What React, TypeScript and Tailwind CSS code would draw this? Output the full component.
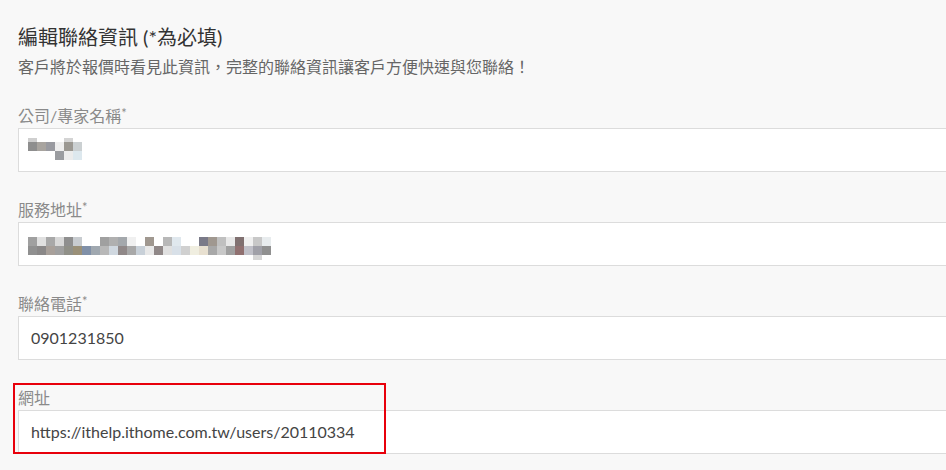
import React from "react";

const companyRows: string[][] = [
  ["bg-[#cfcfcf]", "bg-transparent", "bg-transparent", "bg-transparent", "bg-[#d4d4d4]", "bg-transparent"],
  ["bg-[#8e8e8e]", "bg-[#a8a49f]", "bg-[#999aa0]", "bg-[#eeeeee]", "bg-[#9b9892]", "bg-[#cbd0d2]"],
  ["bg-transparent", "bg-transparent", "bg-transparent", "bg-[#9a9ca0]", "bg-[#ececec]", "bg-[#dde8ee]"],
];

const addressRows: string[][] = [
  [
    "bg-[#a0a0a0]", "bg-[#e0e0e0]", "bg-[#a8a8a8]", "bg-[#d8d8d8]", "bg-[#8f8f8f]", "bg-[#c8ccd0]",
    "bg-transparent", "bg-transparent", "bg-[#a0a0a0]", "bg-[#b0b0b0]", "bg-[#a4a8ac]", "bg-[#f0f0f0]",
    "bg-transparent", "bg-[#a09890]", "bg-transparent", "bg-[#b8b8b8]", "bg-[#e0e8ee]", "bg-transparent",
    "bg-transparent", "bg-[#7a7a88]", "bg-[#a09890]", "bg-[#c0c0c0]", "bg-[#e8e8e8]", "bg-[#807070]",
    "bg-[#f0f0f0]", "bg-[#c8c8c8]", "bg-[#e8ecee]",
  ],
  [
    "bg-[#909090]", "bg-[#8a8888]", "bg-[#a8a09a]", "bg-[#a0a0a0]", "bg-[#909088]", "bg-[#9a9078]",
    "bg-[#8090a8]", "bg-[#a0a8b0]", "bg-[#b8b8b8]", "bg-[#d0d8e0]", "bg-[#908888]", "bg-[#a8a8a8]",
    "bg-[#c8d0d8]", "bg-[#e8e8e8]", "bg-[#908888]", "bg-[#e0e0e0]", "bg-[#d8e0e8]", "bg-[#d0d0d0]",
    "bg-[#f0eee0]", "bg-[#e8e0d0]", "bg-[#a8a8a8]", "bg-[#c8c8c8]", "bg-[#a0a0a0]", "bg-[#907070]",
    "bg-[#c0c0c8]", "bg-[#a0a0a8]", "bg-[#909090]",
  ],
  [
    "bg-transparent", "bg-transparent", "bg-transparent", "bg-transparent", "bg-transparent", "bg-transparent",
    "bg-transparent", "bg-transparent", "bg-transparent", "bg-transparent", "bg-transparent", "bg-transparent",
    "bg-transparent", "bg-transparent", "bg-transparent", "bg-transparent", "bg-transparent", "bg-transparent",
    "bg-transparent", "bg-transparent", "bg-transparent", "bg-transparent", "bg-transparent", "bg-transparent",
    "bg-transparent", "bg-[#d6d6d6]", "bg-transparent",
  ],
];

function Mosaic({ rows, lastRowHeight }: { rows: string[][]; lastRowHeight?: boolean }) {
  return (
    <div className="flex flex-col blur-[0.4px]">
      {rows.map((row, i) => (
        <div key={i} className={`flex ${i === 0 && !lastRowHeight ? "h-[4px]" : i === rows.length - 1 && lastRowHeight ? "h-[5px]" : "h-[9px]"}`}>
          {row.map((c, j) => (
            <div key={j} className={`w-[9px] h-full ${c}`} />
          ))}
        </div>
      ))}
    </div>
  );
}

function Label({ text, required }: { text: string; required?: boolean }) {
  return (
    <div className="h-[24px] leading-[24px] text-[16px] text-[#8a8a8a]">
      {text}
      {required && <span className="text-[13px] align-top relative top-[-3px] text-[#8a8a8a]">*</span>}
    </div>
  );
}

function InputBox({ children }: { children: React.ReactNode }) {
  return (
    <div className="h-[44px] w-[980px] border border-[#dcdcdc] bg-white flex items-center pl-[12px] text-[16px] text-[#444444]">
      {children}
    </div>
  );
}

export default function App() {
  return (
    <div
      className="w-full h-[470px] overflow-hidden bg-[#f8f8f8] pl-[18px] pt-[23px]"
      style={{ fontFamily: 'Lato, "Noto Sans CJK TC", "Noto Sans", sans-serif' }}
    >
      <h1 className="text-[20px] leading-[28px] text-[#333333] font-normal">編輯聯絡資訊 (*為必填)</h1>
      <p className="mt-[4px] text-[16px] leading-[24px] text-[#666666]">
        客戶將於報價時看見此資訊，完整的聯絡資訊讓客戶方便快速與您聯絡！
      </p>

      <div className="mt-[25px]">
        <Label text="公司/專家名稱" required />
        <InputBox>
          <div className="-ml-[3px] mb-[2px]">
            <Mosaic rows={companyRows} />
          </div>
        </InputBox>
      </div>

      <div className="mt-[26px]">
        <Label text="服務地址" required />
        <InputBox>
          <div className="-ml-[3px] mt-[8px]">
            <Mosaic rows={addressRows} lastRowHeight />
          </div>
        </InputBox>
      </div>

      <div className="mt-[26px]">
        <Label text="聯絡電話" required />
        <InputBox>0901231850</InputBox>
      </div>

      <div className="mt-[26px] relative">
        <Label text="網址" />
        <InputBox>https://ithelp.ithome.com.tw/users/20110334</InputBox>
        <div className="absolute left-[-5px] top-[-3px] w-[373px] h-[71px] border-2 border-[#e8000b] pointer-events-none" />
      </div>
    </div>
  );
}
